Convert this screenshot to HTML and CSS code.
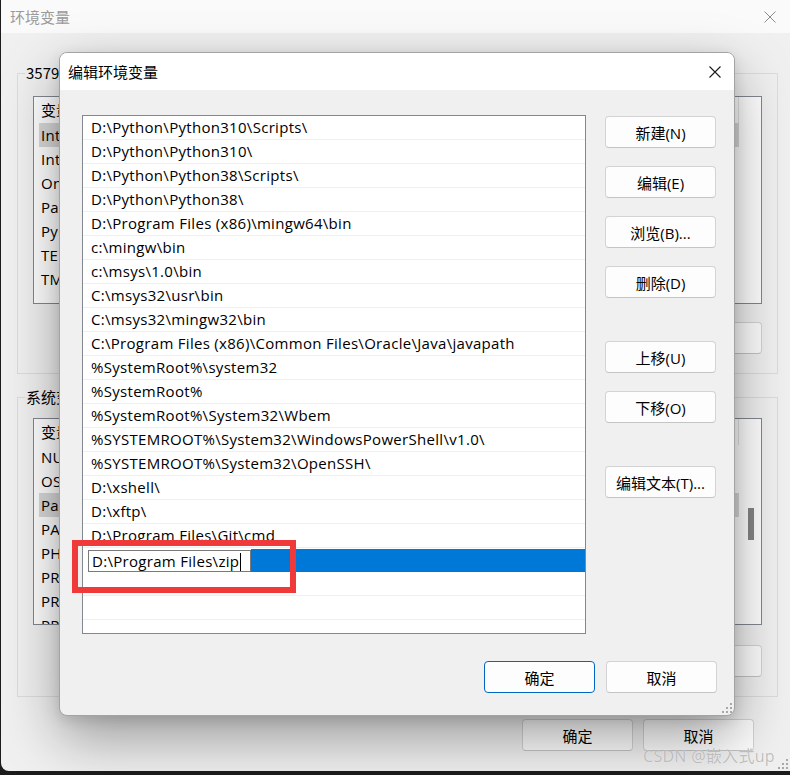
FILE: index.html
```html
<!DOCTYPE html>
<html lang="zh-CN">
<head>
    <meta charset="UTF-8">
    <title>编辑环境变量</title>
    <link rel="stylesheet" href="styles.css">
</head>
<body>

<div class="win">
    <div class="win-title">
        <span>环境变量</span>
        <svg class="win-close" width="12" height="12" viewBox="0 0 12 12"><path d="M0.5 0.5L11.5 11.5M11.5 0.5L0.5 11.5" stroke="#8a8a8a" stroke-width="1" fill="none"/></svg>
    </div>
    <div class="win-body">
        <div class="group group-user">
            <div class="group-title">35796 的用户变量(U)</div>
            <div class="vlist">
                <div class="vhead">变量</div>
                <div class="vrow hl">IntelliJ IDEA</div>
                <div class="vrow">IntelliJ IDEA Community Edition</div>
                <div class="vrow">OneDrive</div>
                <div class="vrow">Path</div>
                <div class="vrow">PyCharm</div>
                <div class="vrow">TEMP</div>
                <div class="vrow">TMP</div>
            </div>
            <div class="btn-row">
                <button class="btn">新建(N)...</button>
                <button class="btn">编辑(E)...</button>
                <button class="btn">删除(D)</button>
            </div>
        </div>
        <div class="group group-sys">
            <div class="group-title">系统变量(S)</div>
            <div class="vlist short">
                <div class="vhead">变量</div>
                <div class="vrow">NUMBER_OF_PROCESSORS</div>
                <div class="vrow">OS</div>
                <div class="vrow hl">Path</div>
                <div class="vrow">PATHEXT</div>
                <div class="vrow">PHPSTORM</div>
                <div class="vrow">PROCESSOR_ARCHITECTURE</div>
                <div class="vrow">PROCESSOR_IDENTIFIER</div>
                <div class="vrow">PROCESSOR_LEVEL</div>
                <div class="thumb"></div>
            </div>
            <div class="btn-row">
                <button class="btn">新建(W)...</button>
                <button class="btn">编辑(I)...</button>
                <button class="btn">删除(L)</button>
            </div>
        </div>
        <div class="win-foot">
            <button class="btn">确定</button>
            <button class="btn">取消</button>
        </div>
    </div>
    <svg class="grip" width="12" height="12" viewBox="0 0 12 12"><g fill="#a8a8a8"><rect x="9" y="1" width="2" height="2"/><rect x="5" y="5" width="2" height="2"/><rect x="9" y="5" width="2" height="2"/><rect x="1" y="9" width="2" height="2"/><rect x="5" y="9" width="2" height="2"/><rect x="9" y="9" width="2" height="2"/></g></svg>
</div>

<div class="dlg">
    <div class="dlg-title">
        <span>编辑环境变量</span>
        <svg width="12" height="12" viewBox="0 0 12 12"><path d="M0.5 0.5L11.5 11.5M11.5 0.5L0.5 11.5" stroke="#1a1a1a" stroke-width="1.1" fill="none"/></svg>
    </div>
    <div class="dlg-body">
        <div class="plist">
            <div class="prow">D:\Python\Python310\Scripts\</div>
            <div class="prow">D:\Python\Python310\</div>
            <div class="prow">D:\Python\Python38\Scripts\</div>
            <div class="prow">D:\Python\Python38\</div>
            <div class="prow">D:\Program Files (x86)\mingw64\bin</div>
            <div class="prow">c:\mingw\bin</div>
            <div class="prow">c:\msys\1.0\bin</div>
            <div class="prow">C:\msys32\usr\bin</div>
            <div class="prow">C:\msys32\mingw32\bin</div>
            <div class="prow">C:\Program Files (x86)\Common Files\Oracle\Java\javapath</div>
            <div class="prow">%SystemRoot%\system32</div>
            <div class="prow">%SystemRoot%</div>
            <div class="prow">%SystemRoot%\System32\Wbem</div>
            <div class="prow">%SYSTEMROOT%\System32\WindowsPowerShell\v1.0\</div>
            <div class="prow">%SYSTEMROOT%\System32\OpenSSH\</div>
            <div class="prow">D:\xshell\</div>
            <div class="prow">D:\xftp\</div>
            <div class="prow">D:\Program Files\Git\cmd</div>
            <div class="prow sel">
                <div class="editor">D:\Program Files\zip<span class="caret"></span></div>
                <div class="sel-fill"></div>
            </div>
            <div class="prow"></div>
            <div class="prow"></div>
            <div class="prow"></div>
        </div>
        <div class="side">
            <button class="btn">新建(N)</button>
            <button class="btn">编辑(E)</button>
            <button class="btn">浏览(B)...</button>
            <button class="btn">删除(D)</button>
            <button class="btn gap">上移(U)</button>
            <button class="btn">下移(O)</button>
            <button class="btn gap">编辑文本(T)...</button>
        </div>
    </div>
    <div class="dlg-foot">
        <button class="btn default">确定</button>
        <button class="btn">取消</button>
    </div>
    <svg class="grip" width="12" height="12" viewBox="0 0 12 12"><g fill="#a8a8a8"><rect x="9" y="1" width="2" height="2"/><rect x="5" y="5" width="2" height="2"/><rect x="9" y="5" width="2" height="2"/><rect x="1" y="9" width="2" height="2"/><rect x="5" y="9" width="2" height="2"/><rect x="9" y="9" width="2" height="2"/></g></svg>
</div>

<!-- red annotation round the edited entry -->
<div class="mark"></div>

<div class="watermark">CSDN @嵌入式up</div>

</body>
</html>
```

FILE: styles.css
```css
* {
    box-sizing: border-box;
}
body {
    margin: 0;
    width: 790px;
    height: 775px;
    overflow: hidden;
    position: relative;
    background-color: #1c1c1c;
    font-family: "Open Sans", "Noto Sans CJK SC", sans-serif;
    font-size: 15px;
    color: #000;
}

/* background window */
.win {
    position: relative;
    margin-left: 1px;
    width: 789px;
    height: 771px;
    background-color: #f0f0f0;
    border-bottom-left-radius: 8px;
    overflow: hidden;
}
.win-title {
    height: 33px;
    background-color: #fafafa;
    display: flex;
    align-items: center;
    justify-content: space-between;
    padding: 0 14px 0 9px;
    color: #9a9a9a;
    font-family: "Noto Sans CJK SC", sans-serif;
    line-height: 20px;
}
.win-body {
    padding: 40px 12px 0 16px;
}
.group {
    border: 1px solid #dcdcdc;
    padding: 0 15px 19px;
}
.group-sys {
    margin-top: 23px;
}
.group-title {
    margin: -11px 0 0 -8px;
    padding: 0 1px;
    width: fit-content;
    height: 20px;
    line-height: 20px;
    background-color: #f0f0f0;
    font-family: "Noto Sans CJK SC", sans-serif;
}
.vlist {
    position: relative;
    margin-top: 13px;
    height: 208px;
    background-color: #fff;
    border: 1px solid #828790;
    overflow: hidden;
    font-size: 15px;
    letter-spacing: 0.3px;
}
.vlist.short {
    margin-top: 11px;
    height: 207px;
}
.vhead {
    height: 26px;
    line-height: 26px;
    padding-left: 7px;
    margin-right: 22px;
    border-right: 1px solid #e3e3e3;
    font-family: "Noto Sans CJK SC", sans-serif;
    letter-spacing: 0;
}
.vrow {
    height: 24px;
    line-height: 24px;
    margin: 0 22px 0 5px;
    padding-left: 2px;
    white-space: nowrap;
    overflow: hidden;
}
.vrow.hl {
    background-color: #d9d9d9;
}
.thumb {
    position: absolute;
    right: 7px;
    top: 89px;
    width: 6px;
    height: 32px;
    background-color: #858585;
}
.btn-row {
    display: flex;
    justify-content: flex-end;
    gap: 10px;
    margin-top: 18px;
}
.group-sys .btn-row {
    margin-top: 20px;
}
.win-foot {
    display: flex;
    justify-content: flex-end;
    gap: 10px;
    margin-top: 22px;
    padding-right: 24px;
}

.btn {
    width: 111px;
    height: 32px;
    padding: 0;
    border: 1px solid #d3d3d3;
    border-bottom-color: #c4c4c4;
    border-radius: 4px;
    background-color: #fdfdfd;
    font-family: "Open Sans", "Noto Sans CJK SC", sans-serif;
    font-size: 15px;
    color: #000;
}
.grip {
    position: absolute;
    right: 1px;
    bottom: 1px;
}

/* edit dialog */
.dlg {
    position: absolute;
    left: 59px;
    top: 52px;
    width: 676px;
    height: 664px;
    background-color: #f0f0f0;
    border: 1px solid #a3a3a3;
    border-radius: 8px;
    overflow: hidden;
    box-shadow: 0 22px 56px rgba(0, 0, 0, 0.36), 0 4px 14px rgba(0, 0, 0, 0.12);
}
.dlg-title {
    height: 37px;
    background-color: #fff;
    display: flex;
    align-items: center;
    justify-content: space-between;
    padding: 0 13px 0 8px;
    font-family: "Noto Sans CJK SC", sans-serif;
    line-height: 20px;
}
.dlg-body {
    display: flex;
    gap: 19px;
    padding: 25px 0 0 22px;
}
.plist {
    width: 504px;
    height: 519px;
    background-color: #fff;
    border: 1px solid #828790;
    overflow: hidden;
}
.prow {
    height: 24px;
    line-height: 23px;
    padding-left: 8px;
    border-bottom: 1px solid #efefef;
    font-size: 15px;
    letter-spacing: 0.3px;
    white-space: nowrap;
}
.prow.sel {
    display: flex;
    padding-left: 5px;
    border-bottom: none;
}
.editor {
    width: 163px;
    height: 22px;
    margin-top: 2px;
    padding-left: 3px;
    border: 1px solid #7a7a7a;
    background-color: #fff;
    line-height: 20px;
    white-space: nowrap;
    overflow: hidden;
}
.caret {
    display: inline-block;
    width: 1px;
    height: 18px;
    margin-left: 1px;
    vertical-align: -4px;
    background-color: #000;
}
.sel-fill {
    flex: 1;
    height: 23px;
    margin-top: 1px;
    background-color: #0078d7;
}
.side {
    display: flex;
    flex-direction: column;
    gap: 18px;
    padding-top: 1px;
}
.side .gap {
    margin-top: 25px;
}
.dlg-foot {
    display: flex;
    justify-content: flex-end;
    gap: 11px;
    padding: 27px 17px 0 0;
}
.btn.default {
    border: 1px solid #0067c0;
}

.mark {
    position: absolute;
    left: 72px;
    top: 540px;
    width: 224px;
    height: 53px;
    border: 6px solid #f03a3a;
}
.watermark {
    position: absolute;
    left: 643px;
    top: 746px;
    font-family: "Open Sans", "Noto Sans CJK SC", sans-serif;
    font-size: 16px;
    line-height: 20px;
    letter-spacing: 0.3px;
    color: rgba(150, 150, 150, 0.6);
    text-shadow: 0 0 1px rgba(255, 255, 255, 0.8);
}
```
